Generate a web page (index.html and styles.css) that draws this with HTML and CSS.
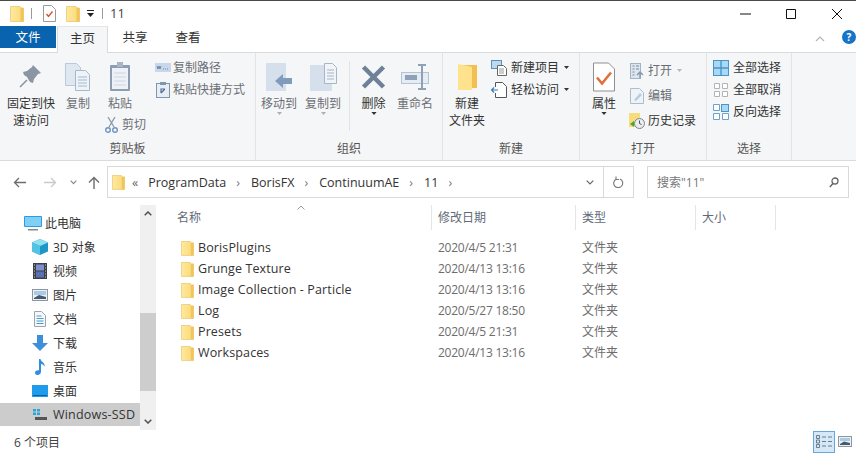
FILE: index.html
```html
<!DOCTYPE html>
<html lang="zh-CN">
<head>
<meta charset="utf-8">
<title>11</title>
<link rel="stylesheet" href="styles.css">
</head>
<body>
<svg class="defs" width="0" height="0">
  <defs>
    <linearGradient id="fg" x1="0" y1="0" x2="1" y2="0"><stop offset="0" stop-color="#ffe9a0"/><stop offset="1" stop-color="#f9d875"/></linearGradient>
    <symbol id="folder" viewBox="0 0 14 17">
      <path d="M.5 1.500h9.500l1 1.500h2.500v13.500H.5z" fill="url(#fg)" stroke="#e8c25e" stroke-width=".7"/>
      <path d="M10.500 3v13.500h3V3z" fill="#f2c55c"/>
    </symbol>
    <symbol id="caret" viewBox="0 0 7 4"><path d="M0 0h7L3.500 4z" fill="currentColor"/></symbol>
  </defs>
</svg>
<div class="window">
  <header class="titlebar">
    <svg class="qa-folder" width="14" height="17"><use href="#folder"/></svg>
    <i class="qa-sep"></i>
    <svg class="qa-check" width="13" height="17" viewBox="0 0 13 17"><path d="M.5.500h8l4 4v12H.5z" fill="#fff" stroke="#9a9a9a"/><path d="M3.500 9l2 2.500 4-5" fill="none" stroke="#d2552b" stroke-width="1.400"/></svg>
    <svg class="qa-folder2" width="14" height="17"><use href="#folder"/></svg>
    <svg class="qa-drop" width="7" height="7" viewBox="0 0 7 7"><path d="M0 0h7v1H0zM0 3h7L3.500 7z" fill="#222"/></svg>
    <i class="qa-sep qa-sep2"></i>
    <span class="title-text">11</span>
    <div class="winbtns">
      <svg width="12" height="12" viewBox="0 0 12 12"><path d="M1 6h11" stroke="#111" fill="none"/></svg>
      <svg width="12" height="12" viewBox="0 0 12 12"><path d="M1.500 1.500h9v9h-9z" stroke="#111" fill="none"/></svg>
      <svg width="12" height="12" viewBox="0 0 12 12"><path d="M1 1l10 10M11 1L1 11" stroke="#111" fill="none"/></svg>
    </div>
  </header>

  <nav class="tabs">
    <span class="tab tab-file">文件</span>
    <span class="tab tab-home">主页</span>
    <span class="tab tab-share">共享</span>
    <span class="tab tab-view">查看</span>
    <span class="tabs-fill"></span>
    <svg class="tab-up" width="10" height="6" viewBox="0 0 10 6"><path d="M1 5l4-4 4 4" fill="none" stroke="#b5b5b5" stroke-width="1.200"/></svg>
    <span class="help">?</span>
  </nav>

  <section class="ribbon">
    <div class="group g-clip">
      <div class="gbody">
        <div class="big b-pin">
          <svg class="ico" width="24" height="24" viewBox="0 0 24 24"><path d="M15 1l8 8-3 1-4 5-1 4-3-1-3-5-3-2-1-3 4-1 5-4z" fill="#8b95a3" transform="translate(-1 -1)"/><path d="M8 15l-7 7" stroke="#8b95a3" stroke-width="1.600"/></svg>
          <span class="dark">固定到快<br>速访问</span>
        </div>
        <div class="big b-copy">
          <svg class="ico" width="26" height="28" viewBox="0 0 26 28"><path d="M.5.500h11l4 4v18H.5z" fill="#dfe7f1" stroke="#bcc9d8"/><path d="M10.500 7.500h10l4 4v16h-14z" fill="#eef3f8" stroke="#a7b8cc"/><path d="M13 14h9M13 17h9M13 20h9M13 23h9" stroke="#a7b8cc"/></svg>
          <span>复制</span>
        </div>
        <div class="paste-col">
          <div class="big b-paste">
            <svg class="ico" width="22" height="30" viewBox="0 0 22 30"><rect x="1" y="3" width="20" height="26" fill="#8c9db4" rx="1"/><rect x="3" y="6" width="16" height="21" fill="#eef2f7"/><path d="M5 11h12M5 15h12M5 19h12M5 23h12" stroke="#ccd5e0"/><rect x="8" y="0" width="6" height="5" fill="#a9b4c2"/></svg>
            <span>粘贴</span>
          </div>
          <div class="small s-cut">
            <svg width="13" height="16" viewBox="0 0 13 16"><path d="M3 0l6 10M10 0L4 10" stroke="#8d98a6" stroke-width="1.300" fill="none"/><circle cx="3" cy="13" r="2.300" fill="none" stroke="#6f93c4" stroke-width="1.400"/><circle cx="10" cy="13" r="2.300" fill="none" stroke="#6f93c4" stroke-width="1.400"/></svg>
            <span>剪切</span>
          </div>
        </div>
        <div class="small-col c-clip">
          <div class="small">
            <svg width="16" height="9" viewBox="0 0 16 9"><rect width="16" height="9" fill="#c8d7ea"/><path d="M2 3l1 3 1-3 1 3 1-3M8 6h1M10 6h1M12 6h1" stroke="#6d89ad" fill="none"/></svg>
            <span>复制路径</span>
          </div>
          <div class="small">
            <svg width="14" height="16" viewBox="0 0 14 16"><rect x=".5" y="1.500" width="13" height="14" fill="#e7edf5" stroke="#8195af"/><rect x="4" y="0" width="6" height="3" fill="#8195af"/><path d="M5 11V7h4M9 7l-4 4" stroke="#4f6f99" stroke-width="1.200" fill="none"/></svg>
            <span>粘贴快捷方式</span>
          </div>
        </div>
      </div>
      <div class="glabel">剪贴板</div>
    </div>

    <div class="group g-org">
      <div class="gbody">
        <div class="big b-move">
          <svg class="ico" width="26" height="28" viewBox="0 0 26 28"><rect width="20" height="28" fill="#d6e0ec"/><path d="M9 18l8-7v4h9v6h-9v4z" fill="#7f9cbd"/></svg>
          <span>移动到</span><svg class="cr" width="5" height="3"><use href="#caret"/></svg>
        </div>
        <div class="big b-copyto">
          <svg class="ico" width="27" height="28" viewBox="0 0 27 28"><rect y="2" width="22" height="26" fill="#d6e0ec"/><path d="M14.500.5h8l4 4v16h-12z" fill="#f1f4f8" stroke="#a7b5c6"/><path d="M17 7h7M17 10h7M17 13h7M17 16h7" stroke="#a7b5c6"/></svg>
          <span>复制到</span><svg class="cr" width="5" height="3"><use href="#caret"/></svg>
        </div>
        <i class="vsep"></i>
        <div class="big b-del">
          <svg class="ico" width="25" height="25" viewBox="0 0 25 25"><path d="M2.500 2.500l20 20M22.500 2.500l-20 20" stroke="#6e8198" stroke-width="4.500"/></svg>
          <span class="dark">删除</span><svg class="cr dk" width="6" height="3"><use href="#caret"/></svg>
        </div>
        <div class="big b-ren">
          <svg class="ico" width="28" height="26" viewBox="0 0 28 26"><rect x=".5" y="8.500" width="27" height="11" fill="#e6ecf3" stroke="#b5c3d3"/><rect x="4" y="11" width="12" height="5" fill="#8fa1b6"/><path d="M17 1h8M21 1v24M17 25h8" stroke="#8fa1b6" stroke-width="2" fill="none"/></svg>
          <span>重命名</span>
        </div>
      </div>
      <div class="glabel">组织</div>
    </div>

    <div class="group g-new">
      <div class="gbody">
        <div class="big b-newf">
          <svg class="ico" width="20" height="28" viewBox="0 0 20 28"><path d="M6 2h14v23H6z" fill="#f4bf4e"/><path d="M1 1l14 3v23L1 27z" fill="#ffe28c"/></svg>
          <span class="dark">新建<br>文件夹</span>
        </div>
        <div class="small-col c-new">
          <div class="small dark">
            <svg width="16" height="16" viewBox="0 0 16 16"><rect x=".5" y=".5" width="10" height="8" fill="#bcd9f2" stroke="#5f8fb8"/><path d="M6.500 5.500h6l3 3v7h-9z" fill="#fff" stroke="#666"/><path d="M8 9h5M8 11h5M8 13h5" stroke="#999"/></svg>
            <span>新建项目</span><svg class="cr2" width="5" height="3"><use href="#caret"/></svg>
          </div>
          <div class="small dark">
            <svg width="16" height="16" viewBox="0 0 16 16"><path d="M4.500.5h7l4 4v11h-11V11M4.500 5V.5" fill="#fff" stroke="#555"/><path d="M0 8h7M3 5.500L.5 8 3 10.500" fill="none" stroke="#2f7fc0" stroke-width="1.200"/></svg>
            <span>轻松访问</span><svg class="cr2" width="5" height="3"><use href="#caret"/></svg>
          </div>
        </div>
      </div>
      <div class="glabel">新建</div>
    </div>

    <div class="group g-open">
      <div class="gbody">
        <div class="big b-prop">
          <svg class="ico" width="22" height="29" viewBox="0 0 22 29"><path d="M.5.500h15l6 6v22H.5z" fill="#fff" stroke="#8f8f8f"/><path d="M4 15l5 6 9-11" fill="none" stroke="#e0703a" stroke-width="2.600"/></svg>
          <span class="dark">属性</span><svg class="cr dk" width="6" height="3"><use href="#caret"/></svg>
        </div>
        <div class="small-col c-open">
          <div class="small">
            <svg width="14" height="16" viewBox="0 0 14 16"><rect x=".5" y=".5" width="10" height="15" fill="#dde5ee" stroke="#a4b2c2"/><path d="M2.500 3h2M2.500 6h2M2.500 9h2M2.500 12h2M6 3h3M6 6h3" stroke="#7a8ca1"/><path d="M7 12l3-3 3 3M10 9v6" stroke="#8198b3" stroke-width="1.400" fill="none"/></svg>
            <span>打开</span><svg class="cr2 pale" width="5" height="3"><use href="#caret"/></svg>
          </div>
          <div class="small">
            <svg width="14" height="16" viewBox="0 0 14 16"><path d="M.5.500h9l4 4v11H.5z" fill="#eef3f8" stroke="#b0bccb"/><path d="M4 12l6-7 2 2-6 6z" fill="#b8cbe0"/></svg>
            <span>编辑</span>
          </div>
          <div class="small dark s-hist">
            <svg width="16" height="16" viewBox="0 0 16 16"><rect width="11" height="14" fill="#f7dc7c"/><circle cx="10.500" cy="10.500" r="5" fill="#e9edf0" stroke="#78848f"/><path d="M10.500 7.500v3l2 1" stroke="#555" fill="none"/><path d="M1 11l4-3v6z" fill="#4fa62c"/></svg>
            <span>历史记录</span>
          </div>
        </div>
      </div>
      <div class="glabel">打开</div>
    </div>

    <div class="group g-sel">
      <div class="gbody">
        <div class="small-col c-sel">
          <div class="small dark">
            <svg width="16" height="16" viewBox="0 0 16 16"><rect x=".5" y=".5" width="15" height="15" fill="#a9d8f5" stroke="#4a94c9"/><path d="M8 .5v15M.5 8h15" stroke="#4a94c9" stroke-width="1.400"/></svg>
            <span>全部选择</span>
          </div>
          <div class="small dark">
            <svg width="14" height="14" viewBox="0 0 14 14" class="s-none"><path d="M.5.500h5v5h-5zM8.500.500h5v5h-5zM.5 8.500h5v5h-5zM8.500 8.500h5v5h-5z" fill="#fff" stroke="#b3b3b3"/></svg>
            <span>全部取消</span>
          </div>
          <div class="small dark">
            <svg width="16" height="16" viewBox="0 0 16 16"><path d="M.5.500h6v6h-6zM.5 9.500h6v6h-6zM9.500 9.500h6v6h-6z" fill="#fff" stroke="#6aa3cf"/><rect x="8.500" y=".5" width="7" height="7" fill="#a9d8f5" stroke="#4a94c9"/></svg>
            <span>反向选择</span>
          </div>
        </div>
      </div>
      <div class="glabel">选择</div>
    </div>
  </section>

  <div class="navbar">
    <svg class="n-back" width="13" height="11" viewBox="0 0 13 11"><path d="M13 5.500H1.500M6 1L1.500 5.500 6 10" fill="none" stroke="#6d6d6d" stroke-width="1.300"/></svg>
    <svg class="n-fwd" width="13" height="11" viewBox="0 0 13 11"><path d="M0 5.500h11.500M7 1l4.500 4.500L7 10" fill="none" stroke="#c9c9c9" stroke-width="1.300"/></svg>
    <svg class="n-down" width="7" height="5" viewBox="0 0 7 5"><path d="M.7.700l2.800 3 2.800-3" fill="none" stroke="#8a8a8a" stroke-width="1.200"/></svg>
    <svg class="n-up" width="12" height="13" viewBox="0 0 12 13"><path d="M6 13V1.500M1 6.500l5-5 5 5" fill="none" stroke="#6d6d6d" stroke-width="1.400"/></svg>
    <div class="address">
      <svg class="a-folder" width="13" height="16"><use href="#folder"/></svg>
      <span class="a-more">«</span>
      <span class="crumb c1">ProgramData</span><span class="sep">›</span>
      <span class="crumb">BorisFX</span><span class="sep">›</span>
      <span class="crumb">ContinuumAE</span><span class="sep">›</span>
      <span class="crumb">11</span><span class="sep">›</span>
      <span class="a-fill"></span>
      <svg class="a-drop" width="8" height="5" viewBox="0 0 8 5"><path d="M.7.700L4 4l3.300-3.300" fill="none" stroke="#666" stroke-width="1.200"/></svg>
      <span class="a-refresh">
        <svg width="11" height="12" viewBox="0 0 11 12"><path d="M3 3.200a4.500 4.500 0 1 0 4-.2M3 .5v3h3" fill="none" stroke="#777" stroke-width="1.100"/></svg>
      </span>
    </div>
    <div class="search">
      <span>搜索"11"</span>
      <svg width="10" height="11" viewBox="0 0 10 11"><circle cx="6" cy="4" r="3" fill="none" stroke="#666" stroke-width="1.300"/><path d="M4 6.500L.8 10" stroke="#666" stroke-width="1.500"/></svg>
    </div>
  </div>

  <main class="main">
    <aside class="navpane">
      <div class="tree">
        <div class="node n-0">
          <svg width="18" height="15" viewBox="0 0 18 15"><rect width="18" height="11" rx="1" fill="#2f9be0"/><rect x="1" y="1" width="16" height="9" fill="#7fd0f7"/><path d="M4 13h10v1.500H4z" fill="#7d8a96"/></svg>
          <span>此电脑</span>
        </div>
        <div class="node">
          <svg width="16" height="16" viewBox="0 0 16 16"><path d="M8 0l8 3.500v9L8 16 0 12.500v-9z" fill="#1e96c8"/><path d="M0 3.500L8 7l8-3.500L8 0z" fill="#8fe0f0"/><path d="M0 3.500L8 7v9l-8-3.500z" fill="#52c4e2"/></svg>
          <span>3D 对象</span>
        </div>
        <div class="node">
          <svg width="14" height="16" viewBox="0 0 14 16"><rect width="14" height="16" fill="#3a3f4a"/><rect x="3" y="1.500" width="8" height="6" fill="#7f8fc9"/><rect x="3" y="8.500" width="8" height="6" fill="#5b6fb5"/><path d="M1 2h1M1 5h1M1 8h1M1 11h1M1 14h1M12 2h1M12 5h1M12 8h1M12 11h1M12 14h1" stroke="#c6c9a8"/></svg>
          <span>视频</span>
        </div>
        <div class="node">
          <svg width="16" height="12" viewBox="0 0 16 12"><rect x=".5" y=".5" width="15" height="11" fill="#eef1f4" stroke="#8b97a3"/><path d="M2 2h12v4H2z" fill="#a9cbe8"/><path d="M2 9l5-3 7 2v2H2z" fill="#47596b"/></svg>
          <span>图片</span>
        </div>
        <div class="node">
          <svg width="12" height="16" viewBox="0 0 12 16"><path d="M.5.500h7l4 4v11H.5z" fill="#f6f8fa" stroke="#9aa5b0"/><path d="M2.500 5h5M2.500 7.500h7M2.500 10h7M2.500 12.500h7" stroke="#4b9ad0"/></svg>
          <span>文档</span>
        </div>
        <div class="node">
          <svg width="16" height="16" viewBox="0 0 16 16"><path d="M5 0h6v8h5l-8 8-8-8h5z" fill="#3d8fdc"/></svg>
          <span>下载</span>
        </div>
        <div class="node">
          <svg width="12" height="16" viewBox="0 0 12 16"><path d="M5 0h1.500c.5 3 5 3.500 4 8-.5-2-2-3-3.500-3v7.500c0 2-1.500 3.500-3.500 3.500S1 14.800 1 13.500 2.500 11 5 11.300z" fill="#2f8ee0"/></svg>
          <span>音乐</span>
        </div>
        <div class="node">
          <svg width="16" height="12" viewBox="0 0 16 12"><rect width="16" height="12" fill="#1e9bea"/><path d="M1 10.500h14" stroke="#0e5ea8"/></svg>
          <span>桌面</span>
        </div>
        <div class="node n-sel">
          <svg width="14" height="11" viewBox="0 0 14 11"><path d="M0 0h3v2.500H0zM4 0h3v2.500H4zM0 3.500h3V6H0zM4 3.500h3V6H4z" fill="#22a7d9"/><rect x="2" y="8" width="12" height="3" fill="#555"/></svg>
          <span class="drive">Windows-SSD</span>
        </div>
      </div>
      <div class="vscroll">
        <svg class="v-arrow" width="8" height="5" viewBox="0 0 8 5"><path d="M.7 4.300L4 1l3.300 3.300" fill="none" stroke="#505050" stroke-width="1.500"/></svg>
        <div class="v-thumb"></div>
        <svg class="v-arrow v-low" width="8" height="5" viewBox="0 0 8 5"><path d="M.7.700L4 4l3.300-3.300" fill="none" stroke="#505050" stroke-width="1.500"/></svg>
      </div>
    </aside>

    <section class="files">
      <div class="fhead">
        <svg class="sort" width="8" height="5" viewBox="0 0 8 5"><path d="M.5 4.500L4 1l3.500 3.500" fill="none" stroke="#9a9a9a"/></svg>
        <span>名称</span>
        <span>修改日期</span>
        <span>类型</span>
        <span>大小</span>
      </div>
      <div class="frows">
        <div class="frow"><span class="f-name"><svg width="13" height="16"><use href="#folder"/></svg>BorisPlugins</span><span class="f-date">2020/4/5 21:31</span><span>文件夹</span></div>
        <div class="frow"><span class="f-name"><svg width="13" height="16"><use href="#folder"/></svg>Grunge Texture</span><span class="f-date">2020/4/13 13:16</span><span>文件夹</span></div>
        <div class="frow"><span class="f-name"><svg width="13" height="16"><use href="#folder"/></svg>Image Collection - Particle</span><span class="f-date">2020/4/13 13:16</span><span>文件夹</span></div>
        <div class="frow"><span class="f-name"><svg width="13" height="16"><use href="#folder"/></svg>Log</span><span class="f-date">2020/5/27 18:50</span><span>文件夹</span></div>
        <div class="frow"><span class="f-name"><svg width="13" height="16"><use href="#folder"/></svg>Presets</span><span class="f-date">2020/4/5 21:31</span><span>文件夹</span></div>
        <div class="frow"><span class="f-name"><svg width="13" height="16"><use href="#folder"/></svg>Workspaces</span><span class="f-date">2020/4/13 13:16</span><span>文件夹</span></div>
      </div>
    </section>
  </main>

  <footer class="status">
    <span class="st-text">6 个项目</span>
    <span class="st-fill"></span>
    <span class="view-on">
      <svg width="16" height="15" viewBox="0 0 16 15"><path d="M.5 1.500h3v3h-3zM.5 6h3v3h-3zM.5 10.500h3v3h-3z" fill="none" stroke="#6b7c8c"/><path d="M6 3h4M12 3h4M6 7.500h4M12 7.500h4M6 12h4M12 12h4" stroke="#6b7c8c"/></svg>
    </span>
    <svg class="view-off" width="14" height="11" viewBox="0 0 14 11"><rect x=".5" y=".5" width="13" height="10" fill="#eef1f4" stroke="#8b97a3"/><path d="M2 2h10v3H2z" fill="#a9cbe8"/><path d="M2 8l4-2.500L12 7v2H2z" fill="#47596b"/></svg>
  </footer>
</div>
</body>
</html>
```

FILE: styles.css
```css
* { box-sizing: border-box; }
html, body { margin: 0; padding: 0; }
body {
  width: 856px;
  height: 453px;
  overflow: hidden;
  background: #fff;
  color: #6b6f75;
  font-family: "Open Sans", "Noto Sans CJK SC", sans-serif;
  font-size: 12px;
  line-height: 17px;
}
.defs { position: absolute; }
svg { flex: none; display: block; }
.window { display: flex; flex-direction: column; height: 453px; }

/* title bar */
.titlebar {
  height: 26px;
  flex: none;
  display: flex;
  align-items: center;
  border-top: 1px solid #4a4a4a;
  color: #333;
  padding-left: 10px;
}
.qa-sep { width: 1px; height: 11px; background: #9a9a9a; margin-left: 7px; }
.qa-check { margin-left: 11px; }
.qa-folder2 { margin-left: 10px; }
.qa-drop { margin-left: 7px; }
.qa-sep2 { margin-left: 8px; }
.title-text { margin-left: 7px; font-size: 13px; color: #444; }
.winbtns { margin-left: auto; display: flex; gap: 34px; padding-right: 13px; }

/* tabs */
.tabs { height: 26px; flex: none; display: flex; color: #333; align-items: flex-start; }
.tab { display: flex; align-items: center; justify-content: center; height: 23px; font-size: 12.5px; }
.tab-file { width: 56px; height: 22px; background: #0a63ae; color: #fff; }
.tab-home {
  width: 51px;
  height: 27px;
  background: #f5f6f7;
  border: 1px solid #dadbdc;
  border-bottom: 0;
  border-top-color: #e6e6e6;
  margin-left: 1px;
  padding-bottom: 4px;
  position: relative;
  z-index: 1;
}
.tab-share { width: 52px; margin-left: 1px; }
.tab-view { width: 52px; margin-left: 1px; }
.tabs-fill { flex: 1; }
.tab-up { margin: 10px 17px 0 0; }
.help {
  width: 14px;
  height: 14px;
  margin: 4px 0 0;
  border-radius: 50%;
  background: #1573c9;
  color: #fff;
  font: bold 10px/14px "Open Sans", sans-serif;
  text-align: center;
}

/* ribbon */
.ribbon {
  height: 109px;
  flex: none;
  display: flex;
  background: #f5f6f7;
  border-top: 1px solid #dadbdc;
  border-bottom: 1px solid #dadbdc;
}
.group { display: flex; flex-direction: column; border-right: 1px solid #e2e3e5; }
.gbody { flex: 1; display: flex; padding-top: 6px; min-height: 0; }
.glabel { height: 20px; flex: none; text-align: center; color: #555; }
.g-clip { width: 256px; }
.g-org { width: 187px; }
.g-new { width: 137px; }
.g-open { width: 127px; }
.g-sel { width: 85px; }
.dark { color: #333; }

.big { display: flex; flex-direction: column; align-items: center; text-align: center; flex: none; }
.big .ico { height: 36px; }
.big span { white-space: nowrap; }
.cr { color: #a9b0b8; }
.cr.dk { color: #333; }
.cr2 { margin-left: 5px; color: #333; }
.cr2.pale { color: #b0b7bf; }

.b-pin { width: 54px; margin-left: 4px; }
.b-copy { width: 40px; }
.paste-col { display: flex; flex-direction: column; width: 52px; }
.b-paste { width: 44px; }
.s-cut { margin: 4px 0 0 7px; }
.small { display: flex; align-items: center; white-space: nowrap; }
.small > svg + span { margin-left: 4px; }
.small-col { display: flex; flex-direction: column; }
.c-clip { margin-left: 5px; gap: 5px; }
.c-clip .small { height: 17px; }
.c-clip .small svg { width: 16px; }
.c-clip .small > svg + span { margin-left: 2px; }

.b-move { width: 46px; }
.b-copyto { width: 42px; }
.vsep { width: 1px; height: 70px; background: #e2e3e5; margin: 2px 0 0 5px; }
.b-del { width: 47px; }
.b-ren { width: 36px; }

.b-newf { width: 48px; }
.c-new { gap: 5px; }
.c-new .small { height: 17px; }

.b-prop { width: 48px; }
.c-open { margin-left: 2px; padding-top: 3px; gap: 8px; }
.c-open .small { height: 17px; }
.s-hist > svg { margin-left: -1px; }
.c-open .s-hist > svg + span { margin-left: 3px; }
.c-sel { margin-left: 6px; gap: 5px; }
.c-sel .small { height: 17px; }
.s-none { margin: 0 1px; }

/* nav bar */
.navbar { height: 39px; flex: none; display: flex; align-items: center; padding-top: 3px; }
.n-back { margin-left: 13px; }
.n-fwd { margin-left: 18px; }
.n-down { margin-left: 13px; }
.n-up { margin-left: 11px; }
.address {
  width: 527px;
  height: 32px;
  margin-left: 7px;
  display: flex;
  align-items: center;
  background: #fff;
  border: 1px solid #d9d9d9;
  padding-left: 4px;
  color: #333;
  font-size: 12.5px;
}
.a-more { margin-left: 7px; color: #666; }
.crumb { margin-left: 11px; }
.c1 { margin-left: 10px; }
.sep { margin-left: 10px; color: #777; }
.a-fill { flex: 1; }
.a-drop { margin-right: 9px; }
.a-refresh { width: 30px; height: 100%; border-left: 1px solid #d9d9d9; display: flex; align-items: center; justify-content: center; }
.search {
  width: 202px;
  height: 32px;
  margin-left: 13px;
  border: 1px solid #d9d9d9;
  display: flex;
  align-items: center;
  justify-content: space-between;
  padding: 0 9px;
  color: #777;
}

/* main */
.main { flex: 1; min-height: 0; display: flex; padding-top: 5px; }
.navpane { width: 156px; flex: none; display: flex; }
.tree { width: 140px; padding-top: 6px; }
.node {
  height: 24px;
  display: grid;
  grid-template-columns: 32px 16px 1fr;
  column-gap: 0;
  align-items: center;
  color: #333;
}
.node > svg { grid-column: 2; justify-self: center; }
.node > span { grid-column: 3; margin-left: 5px; white-space: nowrap; }
.n-0 { grid-template-columns: 24px 18px 1fr; }
.n-0 > span { margin-left: 3px; }
.n-sel { background: #ccc; height: 23px; }
.drive { font-size: 12.5px; letter-spacing: .2px; }
.vscroll { width: 16px; background: #f0f0f0; display: flex; flex-direction: column; align-items: center; height: 225px; }
.v-arrow { margin-top: 6px; }
.v-thumb { width: 100%; height: 78px; margin-top: 97px; background: #cdcdcd; }
.v-low { margin-top: auto; margin-bottom: 6px; }

.files { flex: 1; min-width: 0; }
.fhead {
  position: relative;
  height: 25px;
  display: grid;
  grid-template-columns: 261px 144px 120px 80px;
  margin-left: 15px;
  align-items: center;
}
.fhead span { padding-left: 6px; color: #5f6b78; border-right: 1px solid #e5e5e5; height: 25px; line-height: 25px; }
.sort { position: absolute; left: 126px; top: 0; }
.frows { padding-top: 7px; margin-left: 25px; }
.frow {
  display: grid;
  grid-template-columns: 257px 144px 100px;
  height: 21px;
  align-items: center;
  color: #6d6d6d;
}
.f-name { display: flex; align-items: center; gap: 4px; color: #333; white-space: nowrap; font-size: 12.5px; letter-spacing: .12px; }
.f-date { letter-spacing: -.25px; }

/* status */
.status { height: 23px; flex: none; display: flex; align-items: center; padding-left: 14px; color: #444; }
.st-text { padding-top: 2px; }
.st-fill { flex: 1; }
.view-on { width: 22px; height: 22px; background: #d4e8f7; border: 1px solid #66a7d8; display: flex; align-items: center; justify-content: center; }
.view-off { margin: 0 4px 0 3px; }
```
